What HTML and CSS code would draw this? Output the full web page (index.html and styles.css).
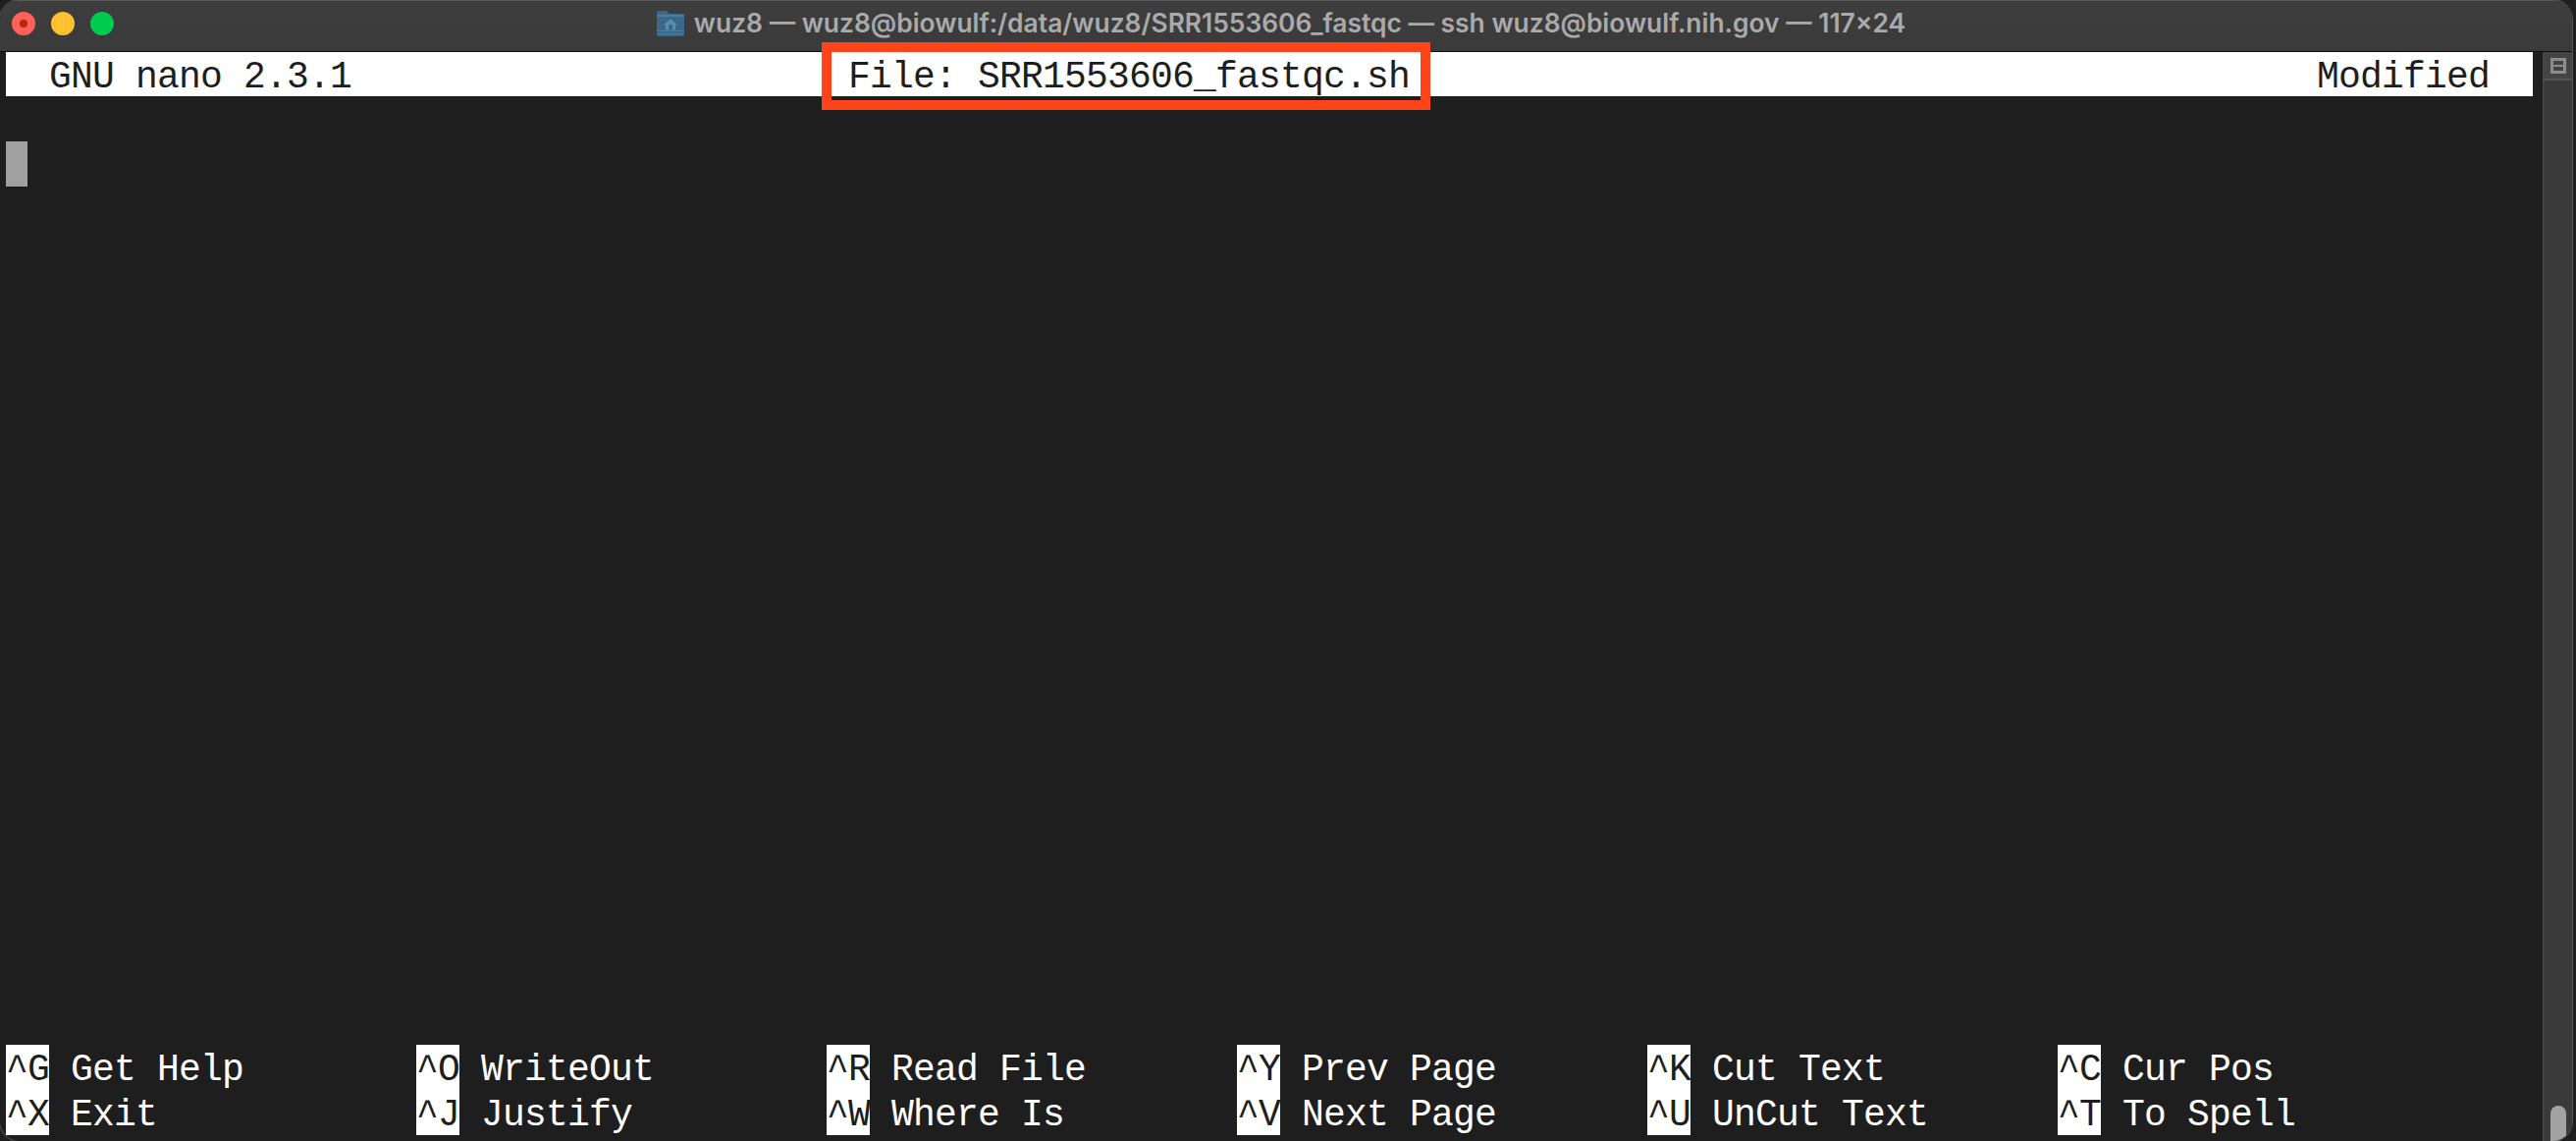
FILE: index.html
```html
<!DOCTYPE html>
<html lang="en">
<head>
<meta charset="utf-8">
<title>Terminal</title>
<link rel="stylesheet" href="styles.css">
</head>
<body>
<div class="window">
  <header class="titlebar">
    <div class="lights">
      <span class="light close"><span class="close-dot"></span></span>
      <span class="light min"></span>
      <span class="light max"></span>
    </div>
    <div class="title">
      <svg class="folder" width="28" height="27" viewBox="0 0 28 27">
        <path d="M0 3a2 2 0 0 1 2-2h8l3 3h13a2 2 0 0 1 2 2v19a2 2 0 0 1-2 2H2a2 2 0 0 1-2-2z" fill="#3b6788"/>
        <path d="M0 5h28v2H0z" fill="#4b7da3"/>
        <path d="M0 21h28v1H0zM0 24h28v1H0z" fill="#4b7da3"/>
        <path d="M14 9l-7 6.500h2v5h10v-5h2z" fill="#5a8cb0"/>
        <rect x="12" y="15" width="4" height="5.500" fill="#3b6788"/>
      </svg>
      <span>wuz8 — wuz8@biowulf:/data/wuz8/SRR1553606_fastqc — ssh wuz8@biowulf.nih.gov — 117×24</span>
    </div>
  </header>
  <div class="body">
    <main class="term">
      <div class="statusbar">
        <span class="st st-left">GNU nano 2.3.1</span>
        <span class="st st-file">File: SRR1553606_fastqc.sh</span>
        <span class="st st-mod">Modified</span>
      </div>
      <div class="blank"></div>
      <div class="cursor"></div>
      <div class="spacer"></div>
      <div class="shortcuts">
        <div class="sc"><b>^G</b><span>Get Help</span></div>
        <div class="sc"><b>^O</b><span>WriteOut</span></div>
        <div class="sc"><b>^R</b><span>Read File</span></div>
        <div class="sc"><b>^Y</b><span>Prev Page</span></div>
        <div class="sc"><b>^K</b><span>Cut Text</span></div>
        <div class="sc"><b>^C</b><span>Cur Pos</span></div>
        <div class="sc"><b>^X</b><span>Exit</span></div>
        <div class="sc"><b>^J</b><span>Justify</span></div>
        <div class="sc"><b>^W</b><span>Where Is</span></div>
        <div class="sc"><b>^V</b><span>Next Page</span></div>
        <div class="sc"><b>^U</b><span>UnCut Text</span></div>
        <div class="sc"><b>^T</b><span>To Spell</span></div>
      </div>
    </main>
    <aside class="scroll">
      <div class="split"><span class="split-icon"></span></div>
      <div class="thumb"></div>
    </aside>
  </div>
</div>
<div class="highlight"></div>
</body>
</html>
```
FILE: styles.css
```css
* { box-sizing: border-box; }
html, body { margin: 0; height: 100%; background: #1f1f1f; overflow: hidden; }
.window { width: 2620px; height: 1162px; display: flex; flex-direction: column; background: #1e1e1e; border-radius: 20px; overflow: hidden; box-shadow: 0 0 0 1px #555; }
.titlebar { height: 53px; flex: none; background: linear-gradient(#3e3e3e, #3a3a3a); border-bottom: 1px solid #0c0c0c; box-shadow: inset 0 1px 0 #5a5a5a; display: flex; align-items: center; justify-content: center; position: relative; padding: 0 10px 6px 0; }
.lights { position: absolute; left: 12px; top: 12px; display: flex; gap: 16px; }
.light { width: 24px; height: 24px; border-radius: 50%; display: flex; align-items: center; justify-content: center; }
.close { background: #ff6058; }
.min { background: #ffc130; }
.max { background: #00cb4e; }
.close-dot { width: 8px; height: 8px; border-radius: 50%; background: #b32a12; }
.title { display: flex; align-items: center; gap: 10px; color: #aaaaaa; font: 600 26.4px/32px Inter, "Liberation Sans", sans-serif; white-space: nowrap; }
.folder { flex: none; }
.body { flex: 1; display: flex; min-height: 0; }
.term { width: 2590px; flex: none; padding: 0 0 6px 6px; display: flex; flex-direction: column; font: 400 38px/52px "Liberation Mono", monospace; letter-spacing: -0.8px; color: #fff; }
.statusbar { width: 2574px; height: 45px; flex: none; background: #fff; color: #1e1e1e; display: grid; grid-template-columns: 858px 1496px 220px; }
.st { white-space: pre; }
.st-left { padding-left: 44px; }
.blank { height: 46px; flex: none; }
.cursor { width: 22px; height: 46px; flex: none; background: #a0a0a0; }
.spacer { flex: 1; }
.shortcuts { display: grid; grid-template-columns: repeat(6, 418px); grid-auto-rows: 46px; flex: none; }
.sc { display: flex; white-space: pre; }
.sc b { font-weight: 400; width: 44px; background: #fff; color: #1e1e1e; }
.sc span { margin-left: 22px; }
.scroll { flex: 1; background: #3a3a3a; border-left: 1px solid #4e4e4e; position: relative; }
.split { height: 29px; background: #444; border-bottom: 2px solid #555; display: flex; align-items: center; justify-content: center; }
.split-icon { width: 16px; height: 16px; border: 3px solid #8c8c8c; background: linear-gradient(#8c8c8c, #8c8c8c) center / 100% 2px no-repeat; }
.thumb { position: absolute; left: 7px; right: 6px; bottom: 0; height: 36px; border-radius: 8px 8px 0 0; background: #a2a2a2; }
.highlight { position: absolute; left: 837px; top: 43px; width: 620px; height: 69px; border: 10px solid #ff4419; pointer-events: none; }
```
